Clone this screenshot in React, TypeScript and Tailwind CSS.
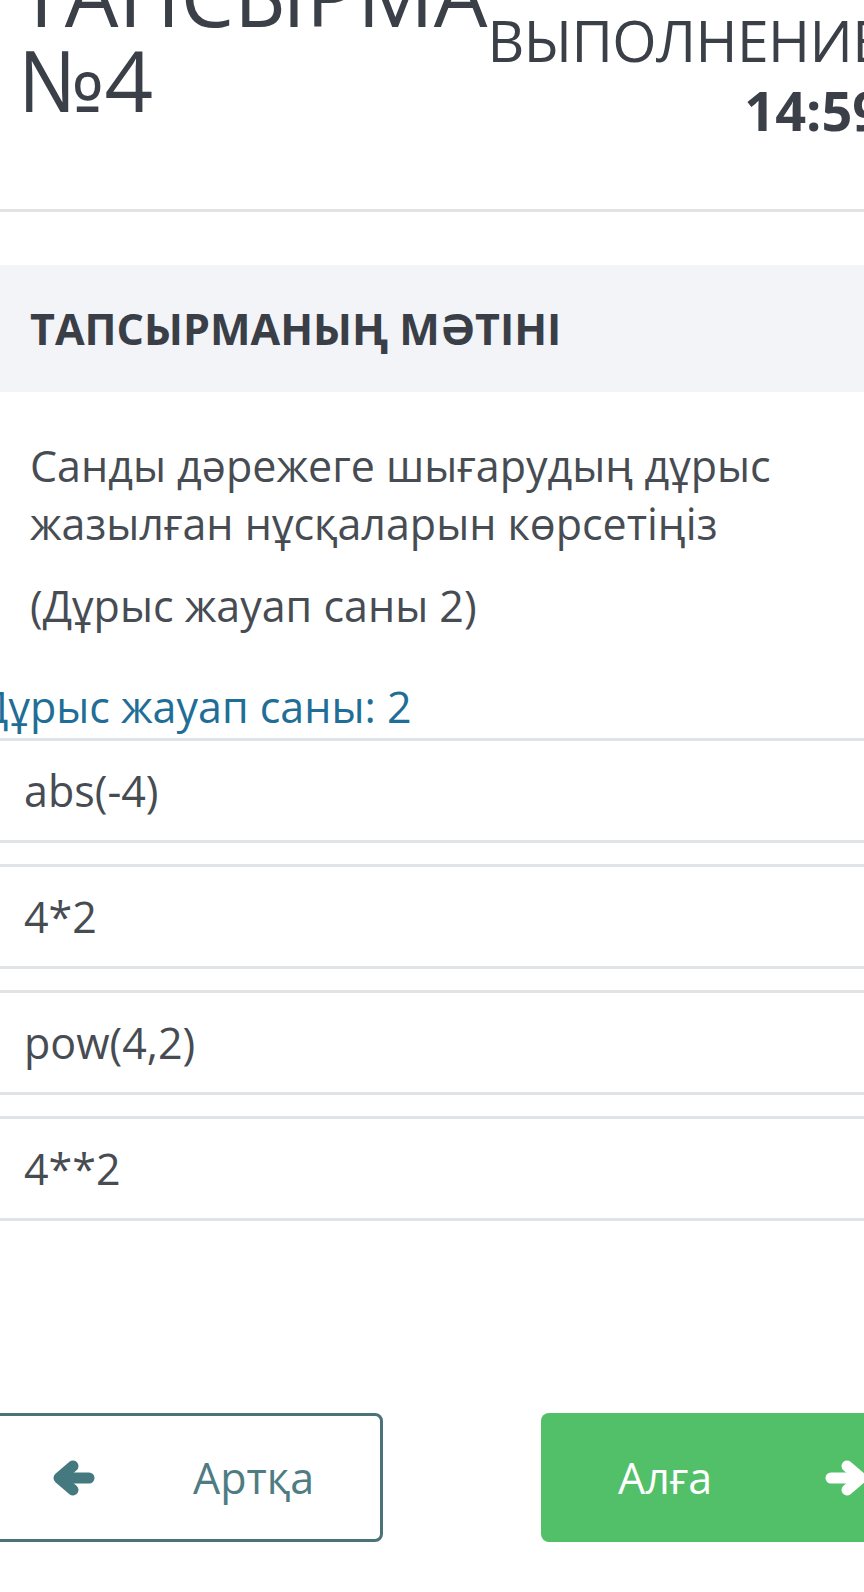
import React from "react";

const ArrowIcon = ({ dir, color }: { dir: "left" | "right"; color: string }) => (
  <svg
    width="43"
    height="36"
    viewBox="0 0 43 36"
    fill="none"
    stroke={color}
    strokeWidth="11"
    strokeLinecap="round"
    strokeLinejoin="round"
    className={dir === "right" ? "-scale-x-100" : ""}
  >
    <polyline points="21,6 7,18 21,30" />
    <line x1="8" y1="18" x2="37" y2="18" />
  </svg>
);

const answers = ["abs(-4)", "4*2", "pow(4,2)", "4**2"];

const App = () => {
  return (
    <div className="w-[864px] h-[1592px] overflow-hidden bg-white font-['Open_Sans',sans-serif]">
      {/* header */}
      <div className="flex h-[212px] items-start justify-between border-b-[3px] border-[#e2e3e5]">
        <div className="ml-[18px] mt-[-48px] text-[85px] font-normal leading-[85px] text-[#3b4048] whitespace-nowrap">
          ТАПСЫРМА
          <br />
          №4
        </div>
        <div className="mr-[-16px] mt-[5px] text-right leading-[70px] text-[#3b4048] whitespace-nowrap">
          <div className="text-[57px] tracking-[-0.6px]">ВЫПОЛНЕНИЕ</div>
          <div className="text-[54px] font-bold">14:59</div>
        </div>
      </div>

      {/* task text */}
      <div className="mt-[53px] flex h-[127px] items-center bg-[#f2f4f7] px-[30px]">
        <h2 className="text-[43px] font-bold leading-none text-[#3a3f47]">
          ТАПСЫРМАНЫҢ МӘТІНІ
        </h2>
      </div>

      <div className="mt-[45px] px-[30px] text-[43px] leading-[58px] text-[#474c53]">
        <p>
          Санды дәрежеге шығарудың дұрыс
          <br />
          жазылған нұсқаларын көрсетіңіз
        </p>
        <p className="mt-[24px]">(Дұрыс жауап саны 2)</p>
      </div>

      <div className="ml-[-21px] mt-[43px] text-[43px] leading-[58px] text-[#1f6e97] whitespace-nowrap">
        Дұрыс жауап саны: 2
      </div>

      <div className="mt-[2px] flex flex-col gap-[21px]">
        {answers.map((a) => (
          <div
            key={a}
            className="flex h-[105px] items-center border-y-[3px] border-[#e1e4e6] pl-[24px] text-[43px] leading-[58px] text-[#474c53]"
          >
            {a}
          </div>
        ))}
      </div>

      {/* nav buttons */}
      <div className="ml-[-17px] mt-[192px] flex gap-[158px]">
        <button className="flex h-[129px] w-[400px] shrink-0 items-center rounded-[8px] border-[3px] border-[#4b7278] pl-[66px]">
          <ArrowIcon dir="left" color="#457980" />
          <span className="ml-[98px] text-[43px] leading-[58px] text-[#4e7c82]">
            Артқа
          </span>
        </button>
        <button className="flex h-[129px] w-[400px] shrink-0 items-center justify-between rounded-[8px] bg-[#52bf69] pl-[77px] pr-[73px]">
          <span className="text-[43px] leading-[58px] text-white">Алға</span>
          <ArrowIcon dir="right" color="#ffffff" />
        </button>
      </div>
    </div>
  );
};

export default App;
